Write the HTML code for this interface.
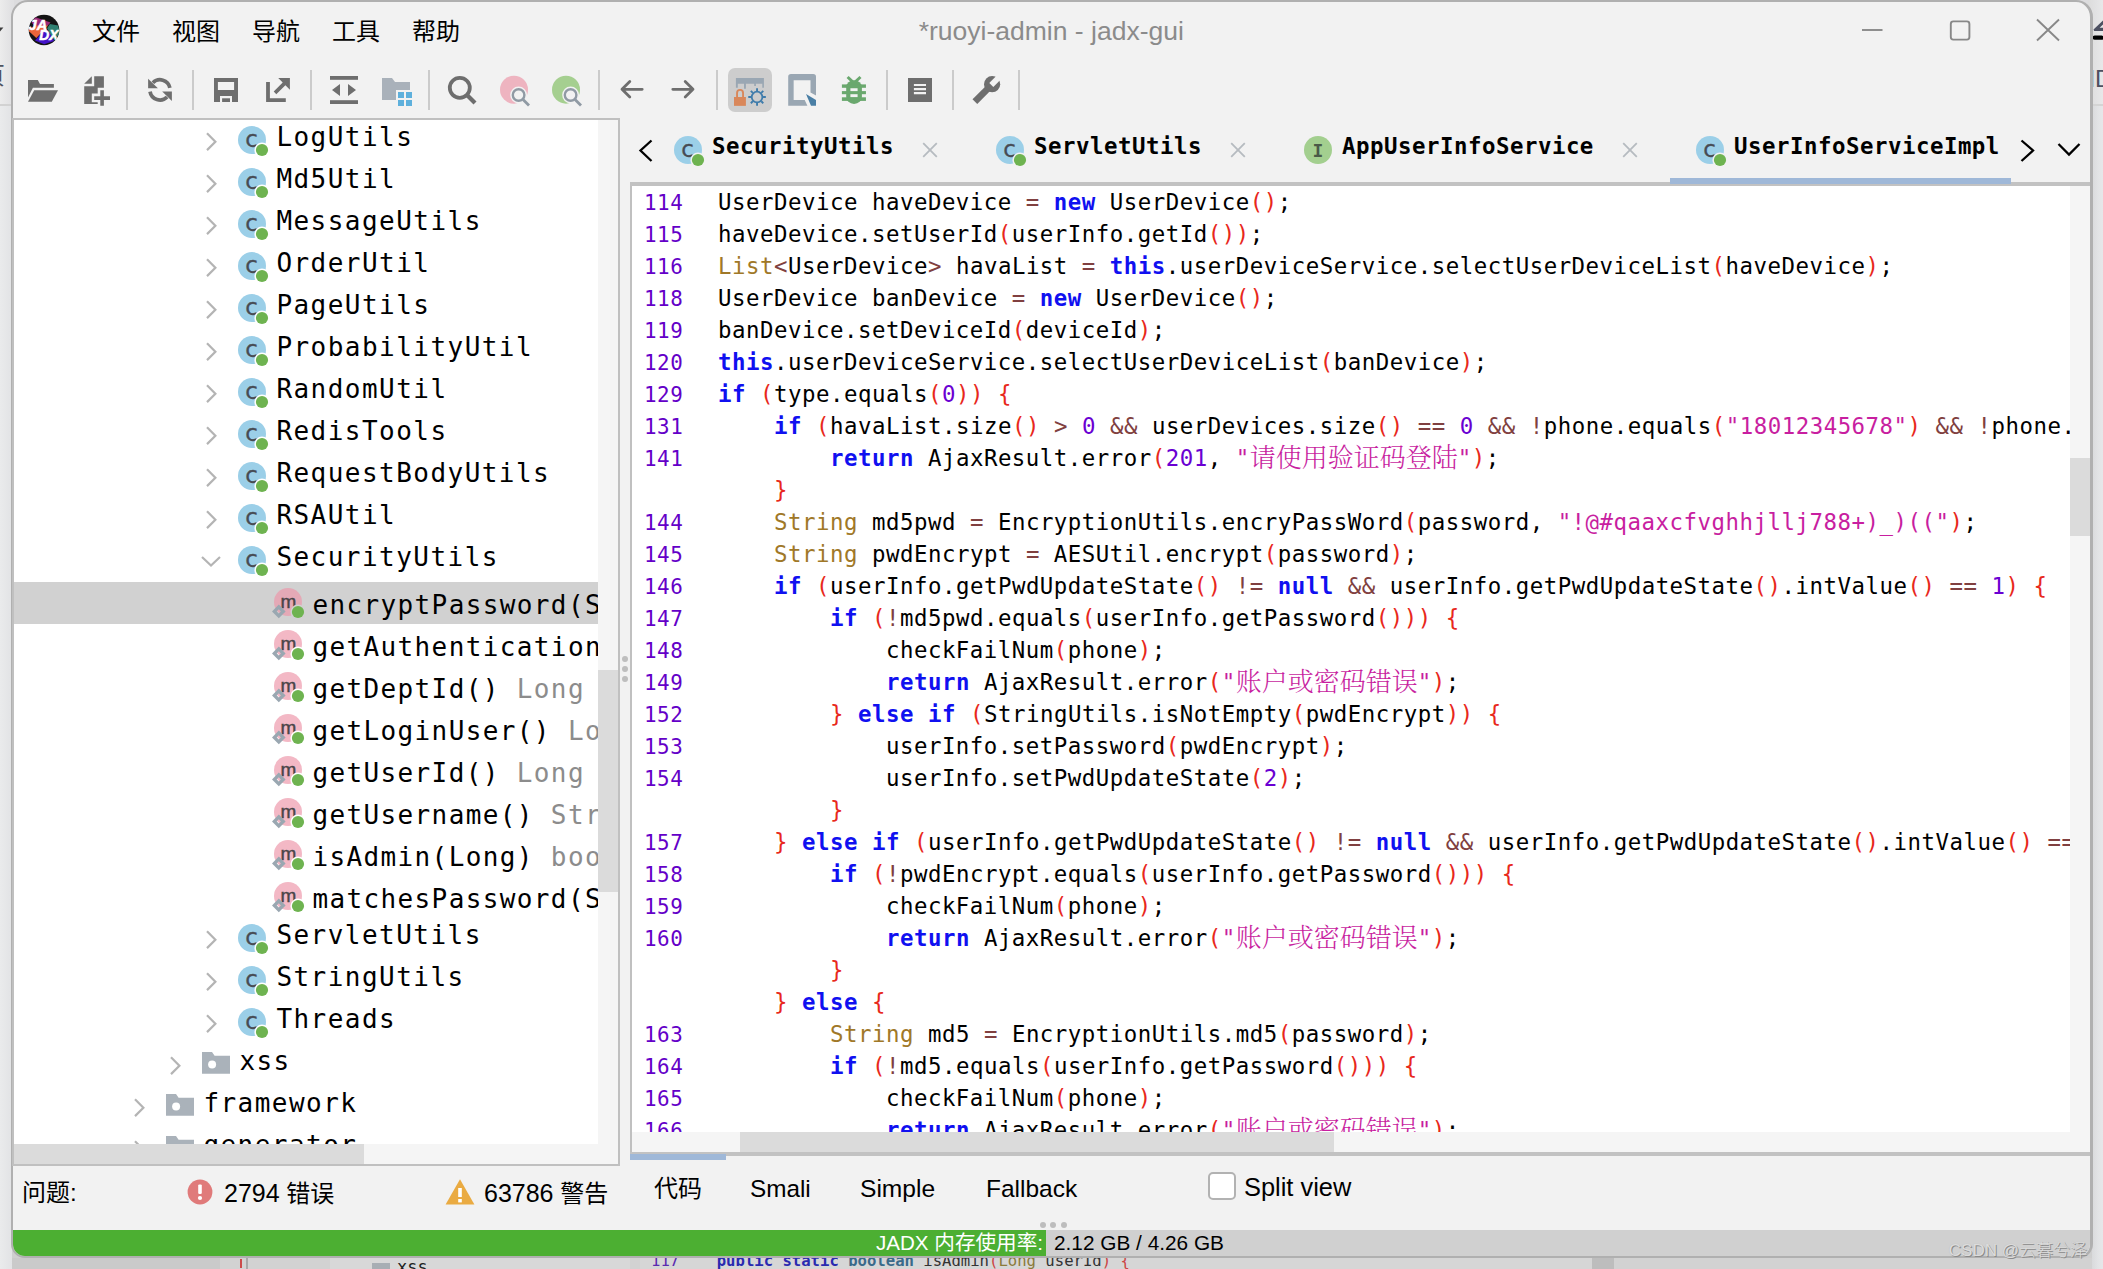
<!DOCTYPE html>
<html lang="zh"><head><meta charset="utf-8"><title>*ruoyi-admin - jadx-gui</title>
<style>
*{box-sizing:border-box;margin:0;padding:0}
html,body{width:2103px;height:1269px;overflow:hidden;background:#dcdcde}
body{position:relative;font-family:"Liberation Sans","Noto Sans CJK SC",sans-serif;color:#000}
.abs{position:absolute}
#bgL{left:0;top:0;width:14px;height:1269px;background:linear-gradient(90deg,#ececec 0,#e6e6e7 6px,#e0e0e2 12px)}
#bgR{left:2088px;top:0;width:15px;height:1269px;background:linear-gradient(90deg,#dcdcdc 0,#e2e2e3 8px,#e8e8e9 15px)}
#bgB{left:0;top:1250px;width:2103px;height:19px;background:#cfcfcf}
#win{left:11px;top:0;width:2082px;height:1258px;background:#f2f2f2;border:2px solid #b0b0b0;border-right-width:3px;border-radius:17px 17px 14px 14px;overflow:hidden}
.menu{top:14px;height:36px;line-height:36px;font-size:24px;white-space:nowrap}
#title{left:701.3px;width:700px;top:12px;height:38px;line-height:38px;text-align:center;font-size:26.5px;color:#8b8b8b;white-space:nowrap}
.sep{width:2px;height:40px;top:70px;background:#cbcbcb}
.tb{top:0;left:0}
#tree{left:12px;top:118px;width:608px;height:1048px;border:2px solid #c0c0c0;background:#fff;overflow:hidden}
#code{left:630px;top:182px;width:1460px;height:974px;background:#fff;border-left:2px solid #c0c0c0;overflow:hidden}
.mono{font-family:"DejaVu Sans Mono","Liberation Mono","Noto Sans CJK SC",monospace;white-space:pre}
.trow{font-size:26px;height:42px;line-height:42px;letter-spacing:1.46px}
.ret{color:#8c8c8c}
.ln,.cl{font-size:22.4px;height:32px;line-height:32px;letter-spacing:.512px}
.ln{color:#6400c8;left:12px;font-size:20.9px;letter-spacing:.52px;margin-top:1px}
.cl{left:86px}
.k{color:#1010f0;font-weight:bold}
.p{color:#e8281c}
.o{color:#804040}
.n{color:#6a00d2}
.s{color:#c81ea0}
.t{color:#a07828}
.cj{font-family:"Noto Serif CJK SC","Noto Sans CJK SC",serif;font-size:26px;line-height:0;letter-spacing:0;font-weight:300;position:relative;top:1px}
.tabt{font-size:22.4px;letter-spacing:.512px;font-weight:bold;top:128px;height:36px;line-height:36px}
.x{top:0;left:0}
.dg{font-size:25px}
.bt{top:1170px;height:38px;line-height:38px;font-size:24px;white-space:nowrap}
</style></head>
<body>
<div id="bgL" class="abs"></div><div id="bgR" class="abs"></div><div id="bgB" class="abs"></div>
<div class="abs" style="left:0;top:1258px;width:2103px;height:11px;overflow:hidden;background:#d2d2d2"><div class="abs" style="left:0;top:0;width:220px;height:11px;background:#cacaca"></div><div class="abs" style="left:330px;top:0;width:300px;height:11px;background:#d8d8d8"></div><div class="abs" style="left:640px;top:0;width:960px;height:11px;background:#d6d6d6"></div><div class="abs" style="left:239.5px;top:1px;width:2.4px;height:9px;background:#cc4a4a"></div><div class="abs" style="left:246px;top:0;width:2px;height:11px;background:#a8a8a8"></div><div class="abs" style="left:372px;top:5px;width:18px;height:10px;background:#a8aeb4"></div><div class="abs mono" style="left:397px;top:-2px;font-size:17px;line-height:22px;color:#222">xss</div><div class="abs mono" style="left:651px;top:-8px;font-size:15.6px;line-height:22px;color:#333"><span style="color:#5a2ab0">117</span>    <b style="color:#2a2ab0">public static</b> <b style="color:#3a6a8a">boolean</b> isAdmin<span style="color:#c44">(</span><span style="color:#8a7a3a">Long</span> userId<span style="color:#c44">)</span> <span style="color:#c44">{</span></div><div class="abs" style="left:1592px;top:0;width:22px;height:11px;background:#bdbdbd"></div></div><div class="abs" style="left:0;top:1100px;width:12px;height:169px;background:linear-gradient(180deg,rgba(0,0,0,0) 0,rgba(0,0,0,.16) 100%)"></div><div class="abs" style="left:0;top:104px;width:12px;height:2px;background:#d2d2d2"></div><div class="abs" style="left:0;top:106px;width:12px;height:1163px;background:linear-gradient(90deg,#eaebec 0,#e2e3e5 12px)"></div><svg class="abs" style="left:0;top:26px" width="6" height="8" viewBox="0 0 6 8"><path d="M-4 1.6 H3.4 L0 5.6 Z" fill="#3c3c3c"/></svg><div class="abs" style="left:-19px;top:60px;width:24px;height:32px;overflow:hidden;font-size:24px;line-height:32px;color:#50535e">页</div><svg class="abs" style="left:2090px;top:14px" width="13" height="30" viewBox="0 0 13 30"><path d="M3.5 15.6 L13 6.4 V10.6 L9.6 13.8 H13 V17 H4.2 Z" fill="#4d5061"/><rect x="2.6" y="21.6" width="11" height="4.2" rx="2" fill="#000"/></svg><div class="abs" style="left:2075px;top:64px;width:28px;height:30px;overflow:hidden;font-size:24px;line-height:30px;color:#4d5061;white-space:nowrap">MD</div><div class="abs" style="left:2092px;top:104px;width:11px;height:2px;background:#d4d4d4"></div><div class="abs" style="left:2092px;top:106px;width:11px;height:1163px;background:linear-gradient(90deg,#d9dadc 0,#e2e3e5 6px,#e6e7e9 11px)"></div>
<div id="win" class="abs"></div>
<div class="abs menu" style="left:92px">文件</div>
<div class="abs menu" style="left:172px">视图</div>
<div class="abs menu" style="left:252px">导航</div>
<div class="abs menu" style="left:332px">工具</div>
<div class="abs menu" style="left:412px">帮助</div>
<div id="title" class="abs">*ruoyi-admin - jadx-gui</div>
<svg class="abs" style="left:27px;top:13px" width="34" height="34" viewBox="0 0 34 34"><defs><clipPath id="lc"><circle cx="17" cy="17" r="15.3"/></clipPath></defs><circle cx="17" cy="17" r="15.8" fill="#f8f8f8"/><circle cx="17" cy="17" r="15.3" fill="#141414"/><g clip-path="url(#lc)"><path d="M4.5 9.5 L8.5 4.2 L23.5 9.4 L19.5 14 L8 13.4 Z" fill="#9a2a78"/><path d="M1 16.6 L8.5 12.4 L21 12.6 L9.3 24.9 L2.2 18.6 Z" fill="#e9653a"/><path d="M22.9 11 L31 12.6 L33 19.5 L27.4 27.4 L23.3 21.7 L20.2 15.2 Z" fill="#2f7f70"/><path d="M18.9 15.2 L23.5 21.8 L27 28 L17.2 31.2 L8 27.4 Z" fill="#4312c8"/><text x="1.6" y="16.5" font-family="Liberation Sans,sans-serif" font-weight="bold" font-style="italic" font-size="14.6" fill="#fff" stroke="#fff" stroke-width=".5">JA</text><text x="12.2" y="27.2" font-family="Liberation Sans,sans-serif" font-weight="bold" font-style="italic" font-size="13.8" fill="#fff" stroke="#fff" stroke-width=".5">DX</text></g></svg>
<svg class="abs" style="left:1860px;top:20px" width="26" height="20" viewBox="0 0 26 20"><path d="M2 10 H22.5" stroke="#888" stroke-width="1.9" fill="none"/></svg><svg class="abs" style="left:1948px;top:18px" width="26" height="26" viewBox="0 0 26 26"><rect x="2.8" y="3.4" width="18.6" height="18.2" rx="2.5" fill="none" stroke="#888" stroke-width="1.9"/></svg><svg class="abs" style="left:2034px;top:16px" width="28" height="28" viewBox="0 0 28 28"><path d="M3 3.5 L25 24.5 M25 3.5 L3 24.5" stroke="#888" stroke-width="1.9" fill="none"/></svg>
<div class="abs sep" style="left:126px"></div><div class="abs sep" style="left:192px"></div><div class="abs sep" style="left:310px"></div><div class="abs sep" style="left:428px"></div><div class="abs sep" style="left:598px"></div><div class="abs sep" style="left:716px"></div><div class="abs sep" style="left:886px"></div><div class="abs sep" style="left:952px"></div><div class="abs sep" style="left:1018px"></div><svg class="abs" style="left:28px;top:78px" width="31" height="26" viewBox="0 0 31 26"><path d="M0 2.1 H9.8 L12 6 H25.9 V9.65 H4.9 L0 19.4 Z" fill="#6e6e6e"/><path d="M6.2 12.2 H30 L23.8 23.8 H0 Z" fill="#6e6e6e"/></svg><svg class="abs" style="left:83px;top:75px" width="28" height="32" viewBox="0 0 28 32"><path d="M1.2 8.8 L8.8 1.2 V8.8 Z" fill="#6e6e6e"/><path d="M11.2 1.2 H20.9 V12.8 H14.7 V18.5 H8.8 V27.3 H14.7 V28.9 H1.2 V11.2 H11.2 Z" fill="#6e6e6e"/><path d="M17.3 15.2 H20.9 V21.2 H27 V24.9 H20.9 V30.8 H17.3 V24.9 H11.2 V21.2 H17.3 Z" fill="#6e6e6e"/></svg><svg class="abs" style="left:146px;top:76px" width="28" height="28" viewBox="0 0 28 28"><path d="M6.86 6.76 A10.1 10.1 0 0 1 23.88 11.8" fill="none" stroke="#6e6e6e" stroke-width="3.7"/><path d="M4.04 15.6 A10.1 10.1 0 0 0 21.14 21.04" fill="none" stroke="#6e6e6e" stroke-width="3.7"/><path d="M2.1 2.8 V12.3 H11.9 Z" fill="#6e6e6e"/><path d="M25.9 25.1 V15.6 H16.2 Z" fill="#6e6e6e"/></svg><svg class="abs" style="left:214px;top:78px" width="24" height="24" viewBox="0 0 24 24"><path d="M0 0 H24 V24 H18 V17.9 H6 V24 H0 Z M3.9 4.1 V12 H20.1 V4.1 Z" fill="#6e6e6e" fill-rule="evenodd"/><rect x="8.1" y="20.3" width="7.9" height="3.7" fill="#6e6e6e"/></svg><svg class="abs" style="left:266px;top:78px" width="24" height="24" viewBox="0 0 24 24"><path d="M0.1 4.1 H3.9 V20.3 H19.8 V23.9 H0.1 Z" fill="#6e6e6e"/><path d="M12.2 0.1 H23.9 V11.7 L19.4 7.2 L10.3 16.25 L7.7 13.6 L16.7 4.6 Z" fill="#6e6e6e"/></svg><svg class="abs" style="left:330px;top:76px" width="28" height="28" viewBox="0 0 28 28"><rect x="0" y="0" width="28" height="3.8" fill="#6e6e6e"/><rect x="0" y="24.2" width="28" height="3.8" fill="#6e6e6e"/><path d="M2 14 L10 8 V20 Z M26 14 L18 8 V20 Z" fill="#6e6e6e"/></svg><svg class="abs" style="left:382px;top:78px" width="32" height="30" viewBox="0 0 32 30"><path d="M0 0 H10 L13 4 H28 V22 H0 Z" fill="#a9b1ba"/><rect x="14" y="12" width="18" height="18" fill="#f2f2f2"/><rect x="16" y="14" width="6" height="6" fill="#5eb0dc"/><rect x="24" y="14" width="6" height="6" fill="#5eb0dc"/><rect x="16" y="22" width="6" height="6" fill="#5eb0dc"/><rect x="24" y="22" width="6" height="6" fill="#5eb0dc"/></svg><svg class="abs" style="left:446px;top:74px" width="32" height="32" viewBox="0 0 32 32"><circle cx="13.8" cy="13.8" r="10" fill="none" stroke="#6e6e6e" stroke-width="3.8"/><path d="M20.5 20.5 L29 29" stroke="#6e6e6e" stroke-width="4.2" fill="none"/></svg><svg class="abs" style="left:500px;top:74px" width="32" height="34" viewBox="0 0 32 34"><circle cx="14" cy="15.7" r="14" fill="#eeb4c0"/><circle cx="18.6" cy="21" r="8.4" fill="#f2f2f2"/><path d="M23 26 L29.5 32" stroke="#f2f2f2" stroke-width="6" fill="none"/><circle cx="18.6" cy="21" r="5.8" fill="none" stroke="#909aa4" stroke-width="2.4"/><path d="M23 25.6 L29 31.4" stroke="#909aa4" stroke-width="2.8" fill="none"/></svg><svg class="abs" style="left:552px;top:74px" width="32" height="34" viewBox="0 0 32 34"><circle cx="14" cy="15.7" r="14" fill="#a5cf90"/><circle cx="18.6" cy="21" r="8.4" fill="#f2f2f2"/><path d="M23 26 L29.5 32" stroke="#f2f2f2" stroke-width="6" fill="none"/><circle cx="18.6" cy="21" r="5.8" fill="none" stroke="#909aa4" stroke-width="2.4"/><path d="M23 25.6 L29 31.4" stroke="#909aa4" stroke-width="2.8" fill="none"/></svg><svg class="abs" style="left:619px;top:79px" width="26" height="22" viewBox="0 0 26 22"><path d="M23.2 10.3 H3 M10.8 2.5 L3 10.3 L10.8 18.1" fill="none" stroke="#6e6e6e" stroke-width="2.8" stroke-linecap="round" stroke-linejoin="round"/></svg><svg class="abs" style="left:671px;top:79px" width="26" height="22" viewBox="0 0 26 22"><path d="M1.8 10.3 H22 M14.2 2.5 L22 10.3 L14.2 18.1" fill="none" stroke="#6e6e6e" stroke-width="2.8" stroke-linecap="round" stroke-linejoin="round"/></svg><div class="abs" style="left:728px;top:68px;width:44px;height:44px;border-radius:7px;background:#cdcdcd"></div><svg class="abs" style="left:732px;top:76px" width="36" height="32" viewBox="0 0 36 32"><path d="M3.9 2 H31.9 V11.8 H30.3 V7.7 H23.9 V9.9 H22.2 V7.7 H13.9 V12.7 H12 V7.7 H5.8 V11.8 H3.9 Z" fill="#9aa7b3"/><rect x="2" y="21" width="11.9" height="8.85" fill="#d9875a"/><path d="M5.05 21.5 V16.9 A3 3 0 0 1 11.05 16.9 V21.5" fill="none" stroke="#d9875a" stroke-width="1.9"/><circle cx="25.05" cy="21.05" r="5.35" fill="none" stroke="#3f7cab" stroke-width="1.8"/><path d="M31.05 21.05 L33.85 21.05 M29.29 25.29 L31.27 27.27 M25.05 27.05 L25.05 29.85 M20.81 25.29 L18.83 27.27 M19.05 21.05 L16.25 21.05 M20.81 16.81 L18.83 14.83 M25.05 15.05 L25.05 12.25 M29.29 16.81 L31.27 14.83 " stroke="#3f7cab" stroke-width="1.9" fill="none"/></svg><svg class="abs" style="left:788px;top:74px" width="30" height="32" viewBox="0 0 30 32"><path d="M3 0 H25.2 A2.8 2.8 0 0 1 28 2.8 V21.6 L22.5 18.5 V6.2 H5.66 V25.9 H16.7 L19.4 31.85 H0.2 V2.8 A2.8 2.8 0 0 1 3 0 Z" fill="#9aa7b3"/><path d="M18 19.96 L28 26.1 V31.85 H23 Z" fill="#4a7fa5"/></svg><svg class="abs" style="left:840px;top:75px" width="28" height="30" viewBox="0 0 28 30"><g fill="#6aa86e"><rect x="6.2" y="5.2" width="15.7" height="23.7" rx="7.8" ry="7"/><rect x="1.9" y="9.4" width="24.05" height="3.4"/><rect x="1.9" y="16.1" width="24.05" height="3.1"/><rect x="1.9" y="22.3" width="24.05" height="3.6"/></g><path d="M7.6 2 L14 8 L20.5 2" fill="none" stroke="#6aa86e" stroke-width="3"/><rect x="10.4" y="13.25" width="7.2" height="2.85" fill="#f2f2f2"/><rect x="10.4" y="19.2" width="7.2" height="2.9" fill="#f2f2f2"/></svg><svg class="abs" style="left:908px;top:78px" width="24" height="24" viewBox="0 0 24 24"><rect width="24" height="24" fill="#6e6e6e"/><path d="M5.9 7 H18 M5.9 11.1 H18 M5.9 15.1 H18" stroke="#f2f2f2" stroke-width="2.1"/></svg><svg class="abs" style="left:972px;top:75px" width="30" height="30" viewBox="0 0 30 30"><path d="M2.9 26.6 L17.5 12" stroke="#6e6e6e" stroke-width="6.7" stroke-linecap="butt" fill="none"/><circle cx="20.1" cy="9.2" r="8.1" fill="#6e6e6e"/><path d="M19.3 10 L30 -0.7" stroke="#f2f2f2" stroke-width="5.7" fill="none"/></svg>
<div id="tree" class="abs">
<div class="abs" style="left:0;top:462px;width:584px;height:42px;background:#d1d1d1"></div>
<svg class="abs" style="left:189px;top:9px" width="16" height="24" viewBox="0 0 16 24"><path d="M4 4.3 L12.4 12.7 L4 21.1" fill="none" stroke="#b4b4b4" stroke-width="2.2"/></svg>
<svg class="abs" style="left:222px;top:4px" width="36" height="36" viewBox="0 0 36 36"><circle cx="16" cy="16" r="14" fill="#9bcfe8"/><text x="15.5" y="22.7" text-anchor="middle" font-family="DejaVu Sans,Liberation Sans,sans-serif" font-size="23" fill="#474c54" stroke="#474c54" stroke-width=".3">c</text><circle cx="26" cy="26" r="7.6" fill="#fff"/><circle cx="26" cy="26" r="6.1" fill="#6eb350"/></svg>
<div class="abs mono trow" style="left:262.4px;top:-4px">LogUtils</div>
<svg class="abs" style="left:189px;top:51px" width="16" height="24" viewBox="0 0 16 24"><path d="M4 4.3 L12.4 12.7 L4 21.1" fill="none" stroke="#b4b4b4" stroke-width="2.2"/></svg>
<svg class="abs" style="left:222px;top:46px" width="36" height="36" viewBox="0 0 36 36"><circle cx="16" cy="16" r="14" fill="#9bcfe8"/><text x="15.5" y="22.7" text-anchor="middle" font-family="DejaVu Sans,Liberation Sans,sans-serif" font-size="23" fill="#474c54" stroke="#474c54" stroke-width=".3">c</text><circle cx="26" cy="26" r="7.6" fill="#fff"/><circle cx="26" cy="26" r="6.1" fill="#6eb350"/></svg>
<div class="abs mono trow" style="left:262.4px;top:38px">Md5Util</div>
<svg class="abs" style="left:189px;top:93px" width="16" height="24" viewBox="0 0 16 24"><path d="M4 4.3 L12.4 12.7 L4 21.1" fill="none" stroke="#b4b4b4" stroke-width="2.2"/></svg>
<svg class="abs" style="left:222px;top:88px" width="36" height="36" viewBox="0 0 36 36"><circle cx="16" cy="16" r="14" fill="#9bcfe8"/><text x="15.5" y="22.7" text-anchor="middle" font-family="DejaVu Sans,Liberation Sans,sans-serif" font-size="23" fill="#474c54" stroke="#474c54" stroke-width=".3">c</text><circle cx="26" cy="26" r="7.6" fill="#fff"/><circle cx="26" cy="26" r="6.1" fill="#6eb350"/></svg>
<div class="abs mono trow" style="left:262.4px;top:80px">MessageUtils</div>
<svg class="abs" style="left:189px;top:135px" width="16" height="24" viewBox="0 0 16 24"><path d="M4 4.3 L12.4 12.7 L4 21.1" fill="none" stroke="#b4b4b4" stroke-width="2.2"/></svg>
<svg class="abs" style="left:222px;top:130px" width="36" height="36" viewBox="0 0 36 36"><circle cx="16" cy="16" r="14" fill="#9bcfe8"/><text x="15.5" y="22.7" text-anchor="middle" font-family="DejaVu Sans,Liberation Sans,sans-serif" font-size="23" fill="#474c54" stroke="#474c54" stroke-width=".3">c</text><circle cx="26" cy="26" r="7.6" fill="#fff"/><circle cx="26" cy="26" r="6.1" fill="#6eb350"/></svg>
<div class="abs mono trow" style="left:262.4px;top:122px">OrderUtil</div>
<svg class="abs" style="left:189px;top:177px" width="16" height="24" viewBox="0 0 16 24"><path d="M4 4.3 L12.4 12.7 L4 21.1" fill="none" stroke="#b4b4b4" stroke-width="2.2"/></svg>
<svg class="abs" style="left:222px;top:172px" width="36" height="36" viewBox="0 0 36 36"><circle cx="16" cy="16" r="14" fill="#9bcfe8"/><text x="15.5" y="22.7" text-anchor="middle" font-family="DejaVu Sans,Liberation Sans,sans-serif" font-size="23" fill="#474c54" stroke="#474c54" stroke-width=".3">c</text><circle cx="26" cy="26" r="7.6" fill="#fff"/><circle cx="26" cy="26" r="6.1" fill="#6eb350"/></svg>
<div class="abs mono trow" style="left:262.4px;top:164px">PageUtils</div>
<svg class="abs" style="left:189px;top:219px" width="16" height="24" viewBox="0 0 16 24"><path d="M4 4.3 L12.4 12.7 L4 21.1" fill="none" stroke="#b4b4b4" stroke-width="2.2"/></svg>
<svg class="abs" style="left:222px;top:214px" width="36" height="36" viewBox="0 0 36 36"><circle cx="16" cy="16" r="14" fill="#9bcfe8"/><text x="15.5" y="22.7" text-anchor="middle" font-family="DejaVu Sans,Liberation Sans,sans-serif" font-size="23" fill="#474c54" stroke="#474c54" stroke-width=".3">c</text><circle cx="26" cy="26" r="7.6" fill="#fff"/><circle cx="26" cy="26" r="6.1" fill="#6eb350"/></svg>
<div class="abs mono trow" style="left:262.4px;top:206px">ProbabilityUtil</div>
<svg class="abs" style="left:189px;top:261px" width="16" height="24" viewBox="0 0 16 24"><path d="M4 4.3 L12.4 12.7 L4 21.1" fill="none" stroke="#b4b4b4" stroke-width="2.2"/></svg>
<svg class="abs" style="left:222px;top:256px" width="36" height="36" viewBox="0 0 36 36"><circle cx="16" cy="16" r="14" fill="#9bcfe8"/><text x="15.5" y="22.7" text-anchor="middle" font-family="DejaVu Sans,Liberation Sans,sans-serif" font-size="23" fill="#474c54" stroke="#474c54" stroke-width=".3">c</text><circle cx="26" cy="26" r="7.6" fill="#fff"/><circle cx="26" cy="26" r="6.1" fill="#6eb350"/></svg>
<div class="abs mono trow" style="left:262.4px;top:248px">RandomUtil</div>
<svg class="abs" style="left:189px;top:303px" width="16" height="24" viewBox="0 0 16 24"><path d="M4 4.3 L12.4 12.7 L4 21.1" fill="none" stroke="#b4b4b4" stroke-width="2.2"/></svg>
<svg class="abs" style="left:222px;top:298px" width="36" height="36" viewBox="0 0 36 36"><circle cx="16" cy="16" r="14" fill="#9bcfe8"/><text x="15.5" y="22.7" text-anchor="middle" font-family="DejaVu Sans,Liberation Sans,sans-serif" font-size="23" fill="#474c54" stroke="#474c54" stroke-width=".3">c</text><circle cx="26" cy="26" r="7.6" fill="#fff"/><circle cx="26" cy="26" r="6.1" fill="#6eb350"/></svg>
<div class="abs mono trow" style="left:262.4px;top:290px">RedisTools</div>
<svg class="abs" style="left:189px;top:345px" width="16" height="24" viewBox="0 0 16 24"><path d="M4 4.3 L12.4 12.7 L4 21.1" fill="none" stroke="#b4b4b4" stroke-width="2.2"/></svg>
<svg class="abs" style="left:222px;top:340px" width="36" height="36" viewBox="0 0 36 36"><circle cx="16" cy="16" r="14" fill="#9bcfe8"/><text x="15.5" y="22.7" text-anchor="middle" font-family="DejaVu Sans,Liberation Sans,sans-serif" font-size="23" fill="#474c54" stroke="#474c54" stroke-width=".3">c</text><circle cx="26" cy="26" r="7.6" fill="#fff"/><circle cx="26" cy="26" r="6.1" fill="#6eb350"/></svg>
<div class="abs mono trow" style="left:262.4px;top:332px">RequestBodyUtils</div>
<svg class="abs" style="left:189px;top:387px" width="16" height="24" viewBox="0 0 16 24"><path d="M4 4.3 L12.4 12.7 L4 21.1" fill="none" stroke="#b4b4b4" stroke-width="2.2"/></svg>
<svg class="abs" style="left:222px;top:382px" width="36" height="36" viewBox="0 0 36 36"><circle cx="16" cy="16" r="14" fill="#9bcfe8"/><text x="15.5" y="22.7" text-anchor="middle" font-family="DejaVu Sans,Liberation Sans,sans-serif" font-size="23" fill="#474c54" stroke="#474c54" stroke-width=".3">c</text><circle cx="26" cy="26" r="7.6" fill="#fff"/><circle cx="26" cy="26" r="6.1" fill="#6eb350"/></svg>
<div class="abs mono trow" style="left:262.4px;top:374px">RSAUtil</div>
<svg class="abs" style="left:185px;top:433px" width="24" height="16" viewBox="0 0 24 16"><path d="M3 4 L12 12.5 L21 4" fill="none" stroke="#b4b4b4" stroke-width="2.2"/></svg>
<svg class="abs" style="left:222px;top:424px" width="36" height="36" viewBox="0 0 36 36"><circle cx="16" cy="16" r="14" fill="#9bcfe8"/><text x="15.5" y="22.7" text-anchor="middle" font-family="DejaVu Sans,Liberation Sans,sans-serif" font-size="23" fill="#474c54" stroke="#474c54" stroke-width=".3">c</text><circle cx="26" cy="26" r="7.6" fill="#fff"/><circle cx="26" cy="26" r="6.1" fill="#6eb350"/></svg>
<div class="abs mono trow" style="left:262.4px;top:416px">SecurityUtils</div>
<svg class="abs" style="left:250px;top:466px" width="44" height="36" viewBox="-8 0 44 36"><circle cx="16" cy="16" r="14" fill="#e4a9b6"/><text x="16.4" y="22.1" text-anchor="middle" font-family="Liberation Sans,sans-serif" font-size="19" fill="#4a4548" stroke="#4a4548" stroke-width=".45">m</text><path d="M6.8 18.6 L13.6 25.4 L6.8 32.2 L0 25.4 Z M6.8 23.3 L4.7 25.4 L6.8 27.5 L8.9 25.4 Z" fill="#9aa7b1" fill-rule="evenodd"/><circle cx="26" cy="26" r="7.6" fill="#d1d1d1"/><circle cx="26" cy="26" r="6.1" fill="#6eb350"/></svg>
<div class="abs mono trow" style="letter-spacing:1.38px;left:298.4px;top:464px">encryptPassword(S<span class="ret"></span></div>
<svg class="abs" style="left:250px;top:508px" width="44" height="36" viewBox="-8 0 44 36"><circle cx="16" cy="16" r="14" fill="#f3b8c5"/><text x="16.4" y="22.1" text-anchor="middle" font-family="Liberation Sans,sans-serif" font-size="19" fill="#4a4548" stroke="#4a4548" stroke-width=".45">m</text><path d="M6.8 18.6 L13.6 25.4 L6.8 32.2 L0 25.4 Z M6.8 23.3 L4.7 25.4 L6.8 27.5 L8.9 25.4 Z" fill="#9aa7b1" fill-rule="evenodd"/><circle cx="26" cy="26" r="7.6" fill="#fff"/><circle cx="26" cy="26" r="6.1" fill="#6eb350"/></svg>
<div class="abs mono trow" style="letter-spacing:1.38px;left:298.4px;top:506px">getAuthentication<span class="ret"></span></div>
<svg class="abs" style="left:250px;top:550px" width="44" height="36" viewBox="-8 0 44 36"><circle cx="16" cy="16" r="14" fill="#f3b8c5"/><text x="16.4" y="22.1" text-anchor="middle" font-family="Liberation Sans,sans-serif" font-size="19" fill="#4a4548" stroke="#4a4548" stroke-width=".45">m</text><path d="M6.8 18.6 L13.6 25.4 L6.8 32.2 L0 25.4 Z M6.8 23.3 L4.7 25.4 L6.8 27.5 L8.9 25.4 Z" fill="#9aa7b1" fill-rule="evenodd"/><circle cx="26" cy="26" r="7.6" fill="#fff"/><circle cx="26" cy="26" r="6.1" fill="#6eb350"/></svg>
<div class="abs mono trow" style="letter-spacing:1.38px;left:298.4px;top:548px">getDeptId()<span class="ret"> Long</span></div>
<svg class="abs" style="left:250px;top:592px" width="44" height="36" viewBox="-8 0 44 36"><circle cx="16" cy="16" r="14" fill="#f3b8c5"/><text x="16.4" y="22.1" text-anchor="middle" font-family="Liberation Sans,sans-serif" font-size="19" fill="#4a4548" stroke="#4a4548" stroke-width=".45">m</text><path d="M6.8 18.6 L13.6 25.4 L6.8 32.2 L0 25.4 Z M6.8 23.3 L4.7 25.4 L6.8 27.5 L8.9 25.4 Z" fill="#9aa7b1" fill-rule="evenodd"/><circle cx="26" cy="26" r="7.6" fill="#fff"/><circle cx="26" cy="26" r="6.1" fill="#6eb350"/></svg>
<div class="abs mono trow" style="letter-spacing:1.38px;left:298.4px;top:590px">getLoginUser()<span class="ret"> Lo</span></div>
<svg class="abs" style="left:250px;top:634px" width="44" height="36" viewBox="-8 0 44 36"><circle cx="16" cy="16" r="14" fill="#f3b8c5"/><text x="16.4" y="22.1" text-anchor="middle" font-family="Liberation Sans,sans-serif" font-size="19" fill="#4a4548" stroke="#4a4548" stroke-width=".45">m</text><path d="M6.8 18.6 L13.6 25.4 L6.8 32.2 L0 25.4 Z M6.8 23.3 L4.7 25.4 L6.8 27.5 L8.9 25.4 Z" fill="#9aa7b1" fill-rule="evenodd"/><circle cx="26" cy="26" r="7.6" fill="#fff"/><circle cx="26" cy="26" r="6.1" fill="#6eb350"/></svg>
<div class="abs mono trow" style="letter-spacing:1.38px;left:298.4px;top:632px">getUserId()<span class="ret"> Long</span></div>
<svg class="abs" style="left:250px;top:676px" width="44" height="36" viewBox="-8 0 44 36"><circle cx="16" cy="16" r="14" fill="#f3b8c5"/><text x="16.4" y="22.1" text-anchor="middle" font-family="Liberation Sans,sans-serif" font-size="19" fill="#4a4548" stroke="#4a4548" stroke-width=".45">m</text><path d="M6.8 18.6 L13.6 25.4 L6.8 32.2 L0 25.4 Z M6.8 23.3 L4.7 25.4 L6.8 27.5 L8.9 25.4 Z" fill="#9aa7b1" fill-rule="evenodd"/><circle cx="26" cy="26" r="7.6" fill="#fff"/><circle cx="26" cy="26" r="6.1" fill="#6eb350"/></svg>
<div class="abs mono trow" style="letter-spacing:1.38px;left:298.4px;top:674px">getUsername()<span class="ret"> Str</span></div>
<svg class="abs" style="left:250px;top:718px" width="44" height="36" viewBox="-8 0 44 36"><circle cx="16" cy="16" r="14" fill="#f3b8c5"/><text x="16.4" y="22.1" text-anchor="middle" font-family="Liberation Sans,sans-serif" font-size="19" fill="#4a4548" stroke="#4a4548" stroke-width=".45">m</text><path d="M6.8 18.6 L13.6 25.4 L6.8 32.2 L0 25.4 Z M6.8 23.3 L4.7 25.4 L6.8 27.5 L8.9 25.4 Z" fill="#9aa7b1" fill-rule="evenodd"/><circle cx="26" cy="26" r="7.6" fill="#fff"/><circle cx="26" cy="26" r="6.1" fill="#6eb350"/></svg>
<div class="abs mono trow" style="letter-spacing:1.38px;left:298.4px;top:716px">isAdmin(Long)<span class="ret"> boo</span></div>
<svg class="abs" style="left:250px;top:760px" width="44" height="36" viewBox="-8 0 44 36"><circle cx="16" cy="16" r="14" fill="#f3b8c5"/><text x="16.4" y="22.1" text-anchor="middle" font-family="Liberation Sans,sans-serif" font-size="19" fill="#4a4548" stroke="#4a4548" stroke-width=".45">m</text><path d="M6.8 18.6 L13.6 25.4 L6.8 32.2 L0 25.4 Z M6.8 23.3 L4.7 25.4 L6.8 27.5 L8.9 25.4 Z" fill="#9aa7b1" fill-rule="evenodd"/><circle cx="26" cy="26" r="7.6" fill="#fff"/><circle cx="26" cy="26" r="6.1" fill="#6eb350"/></svg>
<div class="abs mono trow" style="letter-spacing:1.38px;left:298.4px;top:758px">matchesPassword(S<span class="ret"></span></div>
<svg class="abs" style="left:189px;top:807px" width="16" height="24" viewBox="0 0 16 24"><path d="M4 4.3 L12.4 12.7 L4 21.1" fill="none" stroke="#b4b4b4" stroke-width="2.2"/></svg>
<svg class="abs" style="left:222px;top:802px" width="36" height="36" viewBox="0 0 36 36"><circle cx="16" cy="16" r="14" fill="#9bcfe8"/><text x="15.5" y="22.7" text-anchor="middle" font-family="DejaVu Sans,Liberation Sans,sans-serif" font-size="23" fill="#474c54" stroke="#474c54" stroke-width=".3">c</text><circle cx="26" cy="26" r="7.6" fill="#fff"/><circle cx="26" cy="26" r="6.1" fill="#6eb350"/></svg>
<div class="abs mono trow" style="left:262.4px;top:794px">ServletUtils</div>
<svg class="abs" style="left:189px;top:849px" width="16" height="24" viewBox="0 0 16 24"><path d="M4 4.3 L12.4 12.7 L4 21.1" fill="none" stroke="#b4b4b4" stroke-width="2.2"/></svg>
<svg class="abs" style="left:222px;top:844px" width="36" height="36" viewBox="0 0 36 36"><circle cx="16" cy="16" r="14" fill="#9bcfe8"/><text x="15.5" y="22.7" text-anchor="middle" font-family="DejaVu Sans,Liberation Sans,sans-serif" font-size="23" fill="#474c54" stroke="#474c54" stroke-width=".3">c</text><circle cx="26" cy="26" r="7.6" fill="#fff"/><circle cx="26" cy="26" r="6.1" fill="#6eb350"/></svg>
<div class="abs mono trow" style="left:262.4px;top:836px">StringUtils</div>
<svg class="abs" style="left:189px;top:891px" width="16" height="24" viewBox="0 0 16 24"><path d="M4 4.3 L12.4 12.7 L4 21.1" fill="none" stroke="#b4b4b4" stroke-width="2.2"/></svg>
<svg class="abs" style="left:222px;top:886px" width="36" height="36" viewBox="0 0 36 36"><circle cx="16" cy="16" r="14" fill="#9bcfe8"/><text x="15.5" y="22.7" text-anchor="middle" font-family="DejaVu Sans,Liberation Sans,sans-serif" font-size="23" fill="#474c54" stroke="#474c54" stroke-width=".3">c</text><circle cx="26" cy="26" r="7.6" fill="#fff"/><circle cx="26" cy="26" r="6.1" fill="#6eb350"/></svg>
<div class="abs mono trow" style="left:262.4px;top:878px">Threads</div>
<svg class="abs" style="left:153px;top:933px" width="16" height="24" viewBox="0 0 16 24"><path d="M4 4.3 L12.4 12.7 L4 21.1" fill="none" stroke="#b4b4b4" stroke-width="2.2"/></svg>
<svg class="abs" style="left:188px;top:932px" width="28" height="24" viewBox="0 0 28 24"><path d="M0 0 H10 L12.6 3.8 H28 V21.8 H0 Z" fill="#aab2ba"/><circle cx="10.1" cy="12.6" r="4" fill="#fff"/></svg>
<div class="abs mono trow" style="left:225.4px;top:920px">xss</div>
<svg class="abs" style="left:117px;top:975px" width="16" height="24" viewBox="0 0 16 24"><path d="M4 4.3 L12.4 12.7 L4 21.1" fill="none" stroke="#b4b4b4" stroke-width="2.2"/></svg>
<svg class="abs" style="left:152px;top:974px" width="28" height="24" viewBox="0 0 28 24"><path d="M0 0 H10 L12.6 3.8 H28 V21.8 H0 Z" fill="#aab2ba"/><circle cx="10.1" cy="12.6" r="4" fill="#fff"/></svg>
<div class="abs mono trow" style="left:189.4px;top:962px">framework</div>
<svg class="abs" style="left:117px;top:1017px" width="16" height="24" viewBox="0 0 16 24"><path d="M4 4.3 L12.4 12.7 L4 21.1" fill="none" stroke="#b4b4b4" stroke-width="2.2"/></svg>
<svg class="abs" style="left:152px;top:1016px" width="28" height="24" viewBox="0 0 28 24"><path d="M0 0 H10 L12.6 3.8 H28 V21.8 H0 Z" fill="#aab2ba"/><circle cx="10.1" cy="12.6" r="4" fill="#fff"/></svg>
<div class="abs mono trow" style="left:189.4px;top:1004px">generator</div>
<div class="abs" style="left:584px;top:0;width:20px;height:1044px;background:#f5f5f5"></div>
<div class="abs" style="left:584px;top:550px;width:20px;height:222px;background:#dbdbdb"></div>
<div class="abs" style="left:0;top:1024px;width:604px;height:20px;background:#f5f5f5"></div>
<div class="abs" style="left:0;top:1024px;width:350px;height:20px;background:#dbdbdb"></div>
</div>
<div class="abs" style="left:622px;top:656px;width:6px;height:6px;border-radius:3px;background:#bebebe"></div>
<div class="abs" style="left:622px;top:666px;width:6px;height:6px;border-radius:3px;background:#bebebe"></div>
<div class="abs" style="left:622px;top:676px;width:6px;height:6px;border-radius:3px;background:#bebebe"></div>
<div class="abs" style="left:630px;top:182px;width:1460px;height:4px;background:#c2c2c2"></div>
<div class="abs" style="left:1670px;top:178px;width:341px;height:6px;background:#9fb8d8"></div>
<svg class="abs" style="left:636px;top:138px" width="20" height="26" viewBox="0 0 20 26"><path d="M15.5 2.5 L4.5 12.5 L15.5 23" fill="none" stroke="#000" stroke-width="2.3"/></svg><svg class="abs" style="left:2016px;top:138px" width="20" height="26" viewBox="0 0 20 26"><path d="M5.5 2.5 L17 12.5 L5.5 23" fill="none" stroke="#000" stroke-width="2.3"/></svg><svg class="abs" style="left:2056px;top:140px" width="26" height="18" viewBox="0 0 26 18"><path d="M2.5 4 L13 14.5 L23.5 4" fill="none" stroke="#000" stroke-width="2.3"/></svg><svg class="abs" style="left:672px;top:134px" width="36" height="36" viewBox="0 0 36 36"><circle cx="16" cy="16" r="14" fill="#9bcfe8"/><text x="15.5" y="22.7" text-anchor="middle" font-family="DejaVu Sans,Liberation Sans,sans-serif" font-size="23" fill="#474c54" stroke="#474c54" stroke-width=".3">c</text><circle cx="26" cy="26" r="7.6" fill="#f2f2f2"/><circle cx="26" cy="26" r="6.1" fill="#6eb350"/></svg><div class="abs mono tabt" style="left:712px">SecurityUtils</div><svg class="abs" style="left:921px;top:141px" width="18" height="18" viewBox="0 0 18 18"><path d="M2.2 2.2 L15.8 15.8 M15.8 2.2 L2.2 15.8" stroke="#b6bbc0" stroke-width="1.8" fill="none"/></svg><svg class="abs" style="left:994px;top:134px" width="36" height="36" viewBox="0 0 36 36"><circle cx="16" cy="16" r="14" fill="#9bcfe8"/><text x="15.5" y="22.7" text-anchor="middle" font-family="DejaVu Sans,Liberation Sans,sans-serif" font-size="23" fill="#474c54" stroke="#474c54" stroke-width=".3">c</text><circle cx="26" cy="26" r="7.6" fill="#f2f2f2"/><circle cx="26" cy="26" r="6.1" fill="#6eb350"/></svg><div class="abs mono tabt" style="left:1034px">ServletUtils</div><svg class="abs" style="left:1229px;top:141px" width="18" height="18" viewBox="0 0 18 18"><path d="M2.2 2.2 L15.8 15.8 M15.8 2.2 L2.2 15.8" stroke="#b6bbc0" stroke-width="1.8" fill="none"/></svg><svg class="abs" style="left:1302px;top:134px" width="36" height="36" viewBox="0 0 36 36"><circle cx="16" cy="16" r="14" fill="#a3cf8f"/><text x="16" y="22.5" text-anchor="middle" font-family="DejaVu Sans Mono,Liberation Mono,monospace" font-weight="bold" font-size="18" fill="#4a5a48">I</text></svg><div class="abs mono tabt" style="left:1342px">AppUserInfoService</div><svg class="abs" style="left:1621px;top:141px" width="18" height="18" viewBox="0 0 18 18"><path d="M2.2 2.2 L15.8 15.8 M15.8 2.2 L2.2 15.8" stroke="#b6bbc0" stroke-width="1.8" fill="none"/></svg><svg class="abs" style="left:1694px;top:134px" width="36" height="36" viewBox="0 0 36 36"><circle cx="16" cy="16" r="14" fill="#9bcfe8"/><text x="15.5" y="22.7" text-anchor="middle" font-family="DejaVu Sans,Liberation Sans,sans-serif" font-size="23" fill="#474c54" stroke="#474c54" stroke-width=".3">c</text><circle cx="26" cy="26" r="7.6" fill="#f2f2f2"/><circle cx="26" cy="26" r="6.1" fill="#6eb350"/></svg><div class="abs mono tabt" style="left:1734px">UserInfoServiceImpl</div>
<div id="code" class="abs" style="top:186px;height:966px">
<div class="abs mono ln" style="top:0px">114</div>
<div class="abs mono cl" style="top:0px">UserDevice haveDevice <span class="o">=</span> <span class="k">new</span> UserDevice<span class="p">()</span>;</div>
<div class="abs mono ln" style="top:32px">115</div>
<div class="abs mono cl" style="top:32px">haveDevice.setUserId<span class="p">(</span>userInfo.getId<span class="p">())</span>;</div>
<div class="abs mono ln" style="top:64px">116</div>
<div class="abs mono cl" style="top:64px"><span class="t">List</span><span class="o">&lt;</span>UserDevice<span class="o">&gt;</span> havaList <span class="o">=</span> <span class="k">this</span>.userDeviceService.selectUserDeviceList<span class="p">(</span>haveDevice<span class="p">)</span>;</div>
<div class="abs mono ln" style="top:96px">118</div>
<div class="abs mono cl" style="top:96px">UserDevice banDevice <span class="o">=</span> <span class="k">new</span> UserDevice<span class="p">()</span>;</div>
<div class="abs mono ln" style="top:128px">119</div>
<div class="abs mono cl" style="top:128px">banDevice.setDeviceId<span class="p">(</span>deviceId<span class="p">)</span>;</div>
<div class="abs mono ln" style="top:160px">120</div>
<div class="abs mono cl" style="top:160px"><span class="k">this</span>.userDeviceService.selectUserDeviceList<span class="p">(</span>banDevice<span class="p">)</span>;</div>
<div class="abs mono ln" style="top:192px">129</div>
<div class="abs mono cl" style="top:192px"><span class="k">if</span> <span class="p">(</span>type.equals<span class="p">(</span><span class="n">0</span><span class="p">))</span> <span class="p">{</span></div>
<div class="abs mono ln" style="top:224px">131</div>
<div class="abs mono cl" style="top:224px">    <span class="k">if</span> <span class="p">(</span>havaList.size<span class="p">()</span> <span class="o">&gt;</span> <span class="n">0</span> <span class="o">&amp;&amp;</span> userDevices.size<span class="p">()</span> <span class="o">==</span> <span class="n">0</span> <span class="o">&amp;&amp;</span> <span class="o">!</span>phone.equals<span class="p">(</span><span class="s">"18012345678"</span><span class="p">)</span> <span class="o">&amp;&amp;</span> <span class="o">!</span>phone.</div>
<div class="abs mono ln" style="top:256px">141</div>
<div class="abs mono cl" style="top:256px">        <span class="k">return</span> AjaxResult.error<span class="p">(</span><span class="n">201</span>, <span class="s">"</span><span class="cj s">请使用验证码登陆</span><span class="s">"</span><span class="p">)</span>;</div>
<div class="abs mono cl" style="top:288px">    <span class="p">}</span></div>
<div class="abs mono ln" style="top:320px">144</div>
<div class="abs mono cl" style="top:320px">    <span class="t">String</span> md5pwd <span class="o">=</span> EncryptionUtils.encryPassWord<span class="p">(</span>password, <span class="s">"!@#qaaxcfvghhjllj788+)_)(("</span><span class="p">)</span>;</div>
<div class="abs mono ln" style="top:352px">145</div>
<div class="abs mono cl" style="top:352px">    <span class="t">String</span> pwdEncrypt <span class="o">=</span> AESUtil.encrypt<span class="p">(</span>password<span class="p">)</span>;</div>
<div class="abs mono ln" style="top:384px">146</div>
<div class="abs mono cl" style="top:384px">    <span class="k">if</span> <span class="p">(</span>userInfo.getPwdUpdateState<span class="p">()</span> <span class="o">!=</span> <span class="k">null</span> <span class="o">&amp;&amp;</span> userInfo.getPwdUpdateState<span class="p">()</span>.intValue<span class="p">()</span> <span class="o">==</span> <span class="n">1</span><span class="p">)</span> <span class="p">{</span></div>
<div class="abs mono ln" style="top:416px">147</div>
<div class="abs mono cl" style="top:416px">        <span class="k">if</span> <span class="p">(</span><span class="o">!</span>md5pwd.equals<span class="p">(</span>userInfo.getPassword<span class="p">()))</span> <span class="p">{</span></div>
<div class="abs mono ln" style="top:448px">148</div>
<div class="abs mono cl" style="top:448px">            checkFailNum<span class="p">(</span>phone<span class="p">)</span>;</div>
<div class="abs mono ln" style="top:480px">149</div>
<div class="abs mono cl" style="top:480px">            <span class="k">return</span> AjaxResult.error<span class="p">(</span><span class="s">"</span><span class="cj s">账户或密码错误</span><span class="s">"</span><span class="p">)</span>;</div>
<div class="abs mono ln" style="top:512px">152</div>
<div class="abs mono cl" style="top:512px">        <span class="p">}</span> <span class="k">else</span> <span class="k">if</span> <span class="p">(</span>StringUtils.isNotEmpty<span class="p">(</span>pwdEncrypt<span class="p">))</span> <span class="p">{</span></div>
<div class="abs mono ln" style="top:544px">153</div>
<div class="abs mono cl" style="top:544px">            userInfo.setPassword<span class="p">(</span>pwdEncrypt<span class="p">)</span>;</div>
<div class="abs mono ln" style="top:576px">154</div>
<div class="abs mono cl" style="top:576px">            userInfo.setPwdUpdateState<span class="p">(</span><span class="n">2</span><span class="p">)</span>;</div>
<div class="abs mono cl" style="top:608px">        <span class="p">}</span></div>
<div class="abs mono ln" style="top:640px">157</div>
<div class="abs mono cl" style="top:640px">    <span class="p">}</span> <span class="k">else</span> <span class="k">if</span> <span class="p">(</span>userInfo.getPwdUpdateState<span class="p">()</span> <span class="o">!=</span> <span class="k">null</span> <span class="o">&amp;&amp;</span> userInfo.getPwdUpdateState<span class="p">()</span>.intValue<span class="p">()</span> <span class="o">==</span></div>
<div class="abs mono ln" style="top:672px">158</div>
<div class="abs mono cl" style="top:672px">        <span class="k">if</span> <span class="p">(</span><span class="o">!</span>pwdEncrypt.equals<span class="p">(</span>userInfo.getPassword<span class="p">()))</span> <span class="p">{</span></div>
<div class="abs mono ln" style="top:704px">159</div>
<div class="abs mono cl" style="top:704px">            checkFailNum<span class="p">(</span>phone<span class="p">)</span>;</div>
<div class="abs mono ln" style="top:736px">160</div>
<div class="abs mono cl" style="top:736px">            <span class="k">return</span> AjaxResult.error<span class="p">(</span><span class="s">"</span><span class="cj s">账户或密码错误</span><span class="s">"</span><span class="p">)</span>;</div>
<div class="abs mono cl" style="top:768px">        <span class="p">}</span></div>
<div class="abs mono cl" style="top:800px">    <span class="p">}</span> <span class="k">else</span> <span class="p">{</span></div>
<div class="abs mono ln" style="top:832px">163</div>
<div class="abs mono cl" style="top:832px">        <span class="t">String</span> md5 <span class="o">=</span> EncryptionUtils.md5<span class="p">(</span>password<span class="p">)</span>;</div>
<div class="abs mono ln" style="top:864px">164</div>
<div class="abs mono cl" style="top:864px">        <span class="k">if</span> <span class="p">(</span><span class="o">!</span>md5.equals<span class="p">(</span>userInfo.getPassword<span class="p">()))</span> <span class="p">{</span></div>
<div class="abs mono ln" style="top:896px">165</div>
<div class="abs mono cl" style="top:896px">            checkFailNum<span class="p">(</span>phone<span class="p">)</span>;</div>
<div class="abs mono ln" style="top:928px">166</div>
<div class="abs mono cl" style="top:928px">            <span class="k">return</span> AjaxResult.error<span class="p">(</span><span class="s">"</span><span class="cj s">账户或密码错误</span><span class="s">"</span><span class="p">)</span>;</div>
<div class="abs" style="left:1438px;top:0;width:20px;height:966px;background:#f5f5f5"></div>
<div class="abs" style="left:1438px;top:272px;width:20px;height:78px;background:#dbdbdb"></div>
<div class="abs" style="left:0;top:946px;width:1458px;height:20px;background:#f5f5f5"></div>
<div class="abs" style="left:108px;top:946px;width:594px;height:20px;background:#dbdbdb"></div>
</div>
<div class="abs" style="left:630px;top:1152px;width:1460px;height:4px;background:#c2c2c2"></div>
<div class="abs" style="left:630px;top:1154px;width:96px;height:6px;background:#9fb8d8"></div>
<div class="abs bt" style="left:22px;top:1174px">问题:</div><svg class="abs" style="left:186px;top:1178px" width="28" height="28" viewBox="0 0 28 28"><circle cx="14" cy="14" r="12.4" fill="#e07a7a"/><rect x="12.2" y="6.4" width="3.6" height="9.6" rx="1.2" fill="#fff"/><circle cx="14" cy="20" r="2.1" fill="#fff"/></svg><div class="abs bt" style="left:224px;top:1174px"><span class="dg">2794</span> 错误</div><svg class="abs" style="left:445px;top:1178px" width="30" height="28" viewBox="0 0 30 28"><path d="M15 1.2 L29.4 26.5 H0.6 Z" fill="#eaab42"/><rect x="13.2" y="10" width="3.6" height="9" fill="#fff"/><rect x="13.2" y="21" width="3.6" height="3.4" fill="#fff"/></svg><div class="abs bt" style="left:484px;top:1174px"><span class="dg">63786</span> 警告</div><div class="abs bt" style="left:654px;font-size:24px">代码</div><div class="abs bt" style="left:750px;font-size:24.3px">Smali</div><div class="abs bt" style="left:860px;font-size:24.6px">Simple</div><div class="abs bt" style="left:986px;font-size:24.5px">Fallback</div><div class="abs" style="left:1208px;top:1172px;width:28px;height:28px;background:#fff;border:2px solid #b2b2b2;border-radius:5px"></div><div class="abs bt" style="left:1244px;top:1168px;font-size:25.4px">Split view</div><div class="abs" style="left:1040px;top:1222px;width:6px;height:6px;border-radius:3px;background:#bdbdbd"></div><div class="abs" style="left:1050px;top:1222px;width:6px;height:6px;border-radius:3px;background:#bdbdbd"></div><div class="abs" style="left:1060.5px;top:1222px;width:6px;height:6px;border-radius:3px;background:#bdbdbd"></div><div class="abs" style="left:13px;top:1230px;width:2077px;height:26px;background:#d0d0d0;border-radius:0 0 12px 12px;overflow:hidden"><div class="abs" style="left:0;top:0;width:1033px;height:26px;background:#4caf32"></div></div><div class="abs" style="left:700px;width:343px;top:1229px;height:28px;line-height:28px;text-align:right;color:#fff;font-size:20.6px;white-space:nowrap">JADX 内存使用率:</div><div class="abs" style="left:1054px;top:1229px;height:28px;line-height:28px;font-size:20.8px;white-space:nowrap">2.12 GB / 4.26 GB</div><div class="abs" style="left:1880px;width:207px;top:1239px;height:24px;line-height:24px;text-align:right;font-size:17px;font-weight:300;color:#dcdcdc;text-shadow:1px 1px 0 #8a8a8a,0 0 1px #bbb;white-space:nowrap">CSDN @云暮兮泽</div>
</body></html>
